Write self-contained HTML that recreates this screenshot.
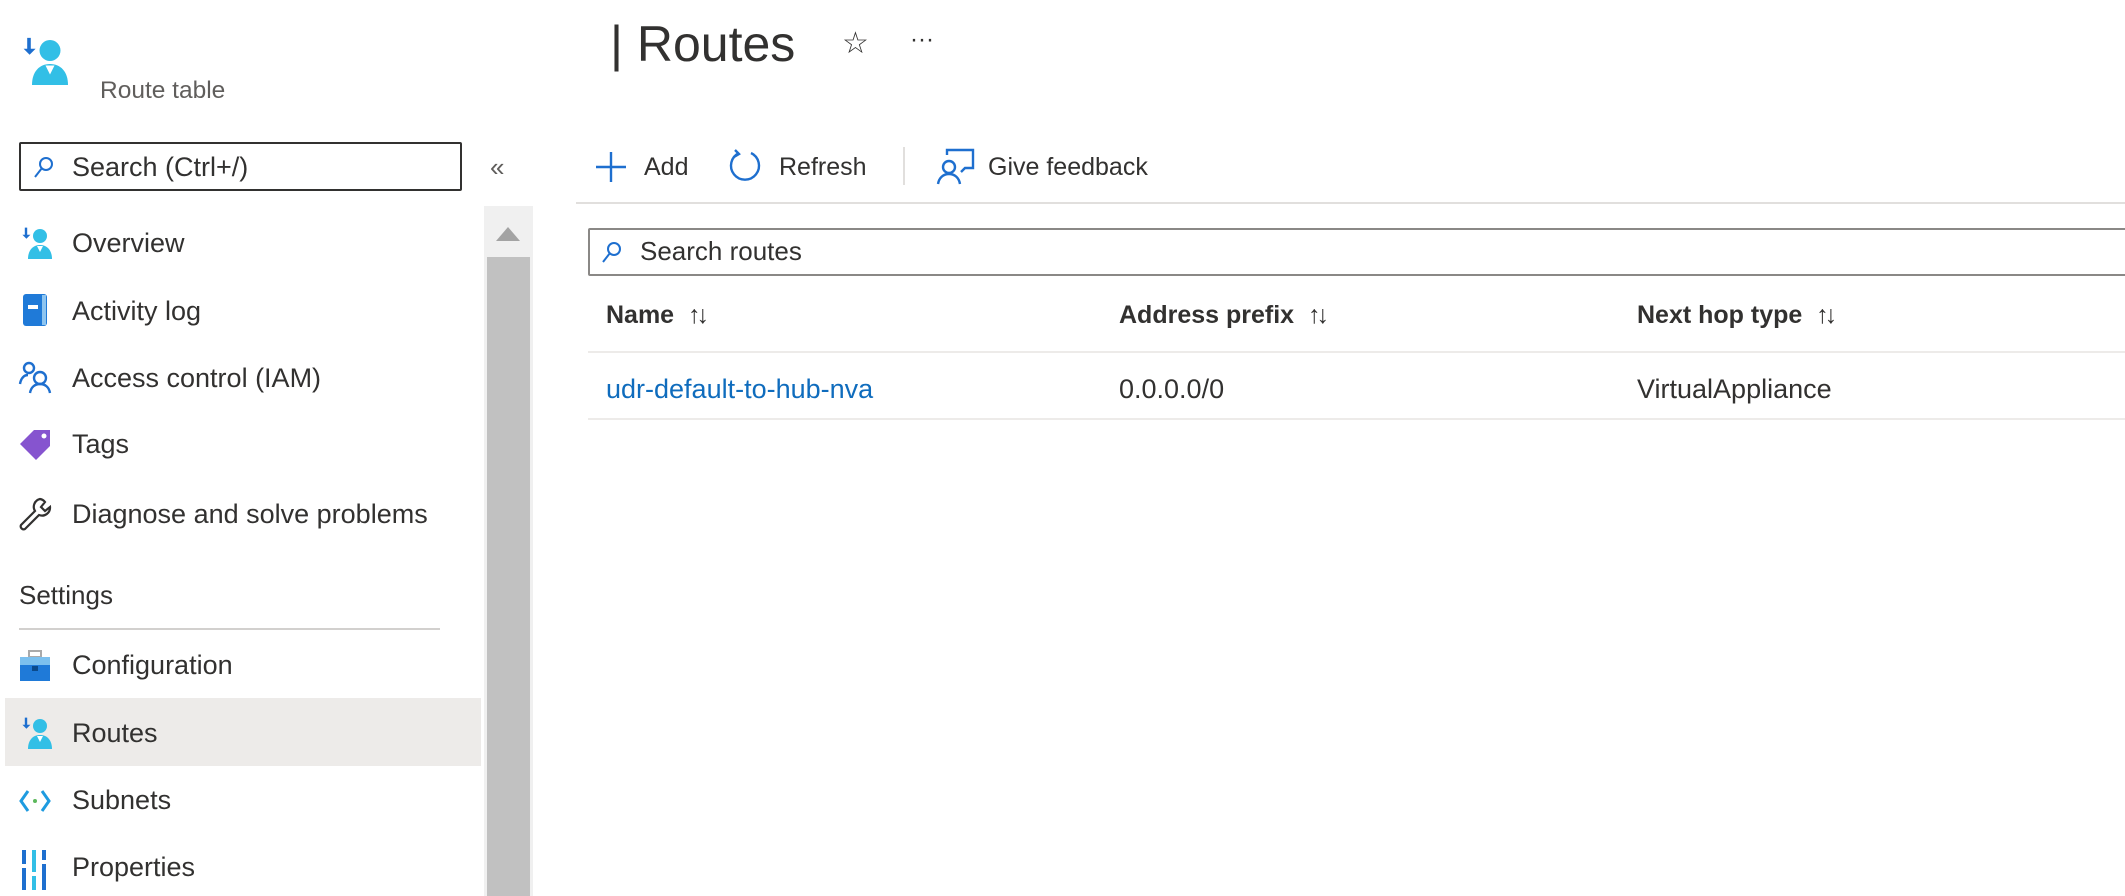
<!DOCTYPE html>
<html><head><meta charset="utf-8"><style>
*{margin:0;padding:0;box-sizing:border-box}
body{width:2125px;height:896px;overflow:hidden;background:#fff;font-family:"Liberation Sans",sans-serif;color:#323130;position:relative}
.a{position:absolute;white-space:nowrap}
.nav{font-size:27px;line-height:30px}
.ic{position:absolute}
.th{font-weight:bold;font-size:25px;line-height:30px;color:#323130}
.td{font-size:27px;line-height:30px}
.sort{font-weight:normal;font-size:25px;margin-left:14px;letter-spacing:-4px}
.tb{font-size:25px;line-height:30px}
</style></head><body>
<svg width="0" height="0" style="position:absolute"><defs>
<symbol id="rt" viewBox="0 0 32 34">
<path d="M6 2v9H3l5 5 5-5H9V2z" fill="#1e6fcf" transform="scale(.8)"/>
<circle cx="20" cy="10" r="7" fill="#32bfe6"/>
<path d="M8 33c0-9 5-14 12-14s12 5 12 14z" fill="#32bfe6"/>
<path d="M17 20l3 6 3-6z" fill="#fff"/>
</symbol></defs></svg>

<svg class="ic" style="left:20px;top:34px" width="48" height="54"><use href="#rt"/></svg>
<div class="a" style="left:100px;top:77px;font-size:24.5px;color:#605e5c">Route table</div>
<div class="a" style="left:610px;top:14px;font-size:50px;line-height:60px;color:#323130">| Routes</div>
<div class="a" style="left:842px;top:26px;font-size:30px">☆</div>
<div class="a" style="left:910px;top:26px;font-size:24px">···</div>

<div class="a" style="left:19px;top:142px;width:443px;height:49px;border:2px solid #323130;border-radius:2px"></div>
<svg class="ic" style="left:32px;top:155px" width="24" height="24" viewBox="0 0 24 24"><circle cx="14" cy="9" r="6" fill="none" stroke="#1e6fcf" stroke-width="2"/><path d="M10 13L3 22" stroke="#1e6fcf" stroke-width="2"/></svg>
<div class="a nav" style="left:72px;top:152px">Search (Ctrl+/)</div>
<div class="a" style="left:490px;top:152px;font-size:26px;color:#605e5c">«</div>

<div class="a nav" style="left:72px;top:228px">Overview</div>
<svg class="ic" style="left:20px;top:226px" width="32" height="34"><use href="#rt"/></svg>
<div class="a nav" style="left:72px;top:296px">Activity log</div>
<svg class="ic" style="left:22px;top:293px" width="26" height="34" viewBox="0 0 26 34"><rect x="1" y="1" width="24" height="32" rx="3" fill="#1f7ad8"/><rect x="20" y="2" width="4" height="30" fill="#8ec5f0"/><rect x="6" y="12" width="10" height="4" fill="#fff"/></svg>
<div class="a nav" style="left:72px;top:363px">Access control (IAM)</div>
<svg class="ic" style="left:18px;top:360px" width="36" height="34" viewBox="0 0 36 34" fill="none" stroke="#1e6fcf" stroke-width="2.4"><circle cx="11" cy="8" r="5"/><circle cx="22" cy="18" r="6"/><path d="M2 24c1-6 4-9 8-9"/><path d="M12 33c1-6 5-9 10-9s9 3 10 9"/></svg>
<div class="a nav" style="left:72px;top:429px">Tags</div>
<svg class="ic" style="left:20px;top:428px" width="32" height="32" viewBox="0 0 32 32"><path d="M14 2h16v16L16 32 0 16z" fill="#8654cf"/><circle cx="24" cy="8" r="2.5" fill="#fff"/></svg>
<div class="a nav" style="left:72px;top:499px">Diagnose and solve problems</div>
<svg class="ic" style="left:18px;top:496px" width="34" height="36" viewBox="0 0 34 36" fill="none" stroke="#323130" stroke-width="2.2"><path d="M22 3a8 8 0 00-5 12L3 29a3 3 0 004 4l14-14a8 8 0 0011-8l-5 4-4-4 4-5a8 8 0 00-5-3z"/></svg>

<div class="a" style="left:19px;top:580px;font-size:26px;line-height:30px">Settings</div>
<div class="a" style="left:19px;top:628px;width:421px;height:2px;background:#d2d0ce"></div>

<div class="a nav" style="left:72px;top:650px">Configuration</div>
<svg class="ic" style="left:19px;top:650px" width="32" height="32" viewBox="0 0 32 32"><rect x="10" y="1" width="12" height="6" fill="none" stroke="#aaa" stroke-width="2"/><rect x="1" y="7" width="30" height="24" fill="#1f7ad8"/><rect x="1" y="7" width="30" height="8" fill="#7cc0ee"/><rect x="13" y="16" width="6" height="5" fill="#0b4a8b"/></svg>

<div class="a" style="left:5px;top:698px;width:476px;height:68px;background:#edebe9"></div>
<div class="a nav" style="left:72px;top:718px">Routes</div>
<svg class="ic" style="left:20px;top:716px" width="32" height="34"><use href="#rt"/></svg>
<div class="a nav" style="left:72px;top:785px">Subnets</div>
<svg class="ic" style="left:18px;top:788px" width="34" height="26" viewBox="0 0 34 26" fill="none" stroke-width="3"><path d="M10 3L3 13l7 10" stroke="#1e9be0"/><path d="M24 3l7 10-7 10" stroke="#1e9be0"/><circle cx="17" cy="13" r="2" fill="#5cb85c" stroke="none"/></svg>
<div class="a nav" style="left:72px;top:852px">Properties</div>
<svg class="ic" style="left:20px;top:850px" width="30" height="40" viewBox="0 0 30 40"><rect x="2" y="0" width="4" height="40" fill="#1e6fcf"/><rect x="12" y="0" width="4" height="40" fill="#32bfe6"/><rect x="22" y="0" width="4" height="40" fill="#1e6fcf"/><rect x="2" y="14" width="4" height="4" fill="#fff"/><rect x="12" y="22" width="4" height="4" fill="#fff"/><rect x="22" y="10" width="4" height="4" fill="#fff"/></svg>

<div class="a" style="left:484px;top:206px;width:49px;height:690px;background:#f0f0f0"></div>
<div class="a" style="left:487px;top:257px;width:43px;height:639px;background:#c1c1c1"></div>
<div class="a" style="left:496px;top:227px;width:0;height:0;border-left:12px solid transparent;border-right:12px solid transparent;border-bottom:14px solid #a3a3a3"></div>

<svg class="ic" style="left:594px;top:150px" width="34" height="34" viewBox="0 0 34 34"><path d="M17 2v30M2 17h30" stroke="#1e6fcf" stroke-width="2.4"/></svg>
<div class="a tb" style="left:644px;top:152px">Add</div>
<svg class="ic" style="left:727px;top:148px" width="36" height="38" viewBox="0 0 36 38" fill="none" stroke="#1e6fcf" stroke-width="2.4"><path d="M12 5A14 14 0 1024 5"/><path d="M8 2l4 4-5 3"/></svg>
<div class="a tb" style="left:779px;top:152px">Refresh</div>
<div class="a" style="left:903px;top:147px;width:2px;height:38px;background:#e1dfdd"></div>
<svg class="ic" style="left:935px;top:148px" width="40" height="38" viewBox="0 0 40 38" fill="none" stroke="#1e6fcf" stroke-width="2.4"><path d="M12 7V2h26v18h-8l-4 4"/><circle cx="14" cy="19" r="6"/><path d="M3 36c1-6 5-10 11-10s10 4 11 10"/></svg>
<div class="a tb" style="left:988px;top:152px">Give feedback</div>
<div class="a" style="left:576px;top:202px;width:1549px;height:2px;background:#e1dfdd"></div>

<div class="a" style="left:588px;top:228px;width:1545px;height:48px;border:2px solid #8a8886;border-radius:2px"></div>
<svg class="ic" style="left:600px;top:240px" width="24" height="24" viewBox="0 0 24 24"><circle cx="14" cy="9" r="6" fill="none" stroke="#1e6fcf" stroke-width="2"/><path d="M10 13L3 22" stroke="#1e6fcf" stroke-width="2"/></svg>
<div class="a td" style="left:640px;top:236px;font-size:26px">Search routes</div>

<div class="a th" style="left:606px;top:300px">Name<span class="sort">↑↓</span></div>
<div class="a th" style="left:1119px;top:300px">Address prefix<span class="sort">↑↓</span></div>
<div class="a th" style="left:1637px;top:300px">Next hop type<span class="sort">↑↓</span></div>
<div class="a" style="left:588px;top:351px;width:1537px;height:2px;background:#edebe9"></div>
<div class="a td" style="left:606px;top:374px;color:#0f6cbd">udr-default-to-hub-nva</div>
<div class="a td" style="left:1119px;top:374px">0.0.0.0/0</div>
<div class="a td" style="left:1637px;top:374px">VirtualAppliance</div>
<div class="a" style="left:588px;top:418px;width:1537px;height:2px;background:#edebe9"></div>
</body></html>
